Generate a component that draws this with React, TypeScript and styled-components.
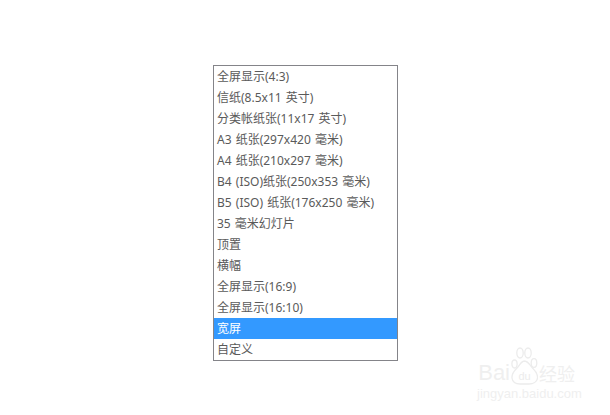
import React from "react";
import styled, { createGlobalStyle } from "styled-components";

const GlobalStyle = createGlobalStyle`
  html, body {
    margin: 0;
    padding: 0;
    background: #ffffff;
  }
  #root {
    width: 610px;
    height: 415px;
  }
`;

const Page = styled.div`
  position: relative;
  display: flex;
  align-items: flex-start;
  width: 610px;
  height: 415px;
  overflow: hidden;
  box-sizing: border-box;
  padding: 65px 0 0 213px;
  font-family: "Noto Sans", "Noto Sans CJK SC", sans-serif;
`;

const List = styled.ul`
  display: flex;
  flex-direction: column;
  width: 185px;
  box-sizing: border-box;
  margin: 0;
  padding: 0;
  list-style: none;
  border: 1px solid #848489;
`;

const Item = styled.li<{ $selected?: boolean }>`
  height: 21px;
  line-height: 21px;
  padding-left: 3px;
  font-size: 12px;
  word-spacing: 1px;
  white-space: nowrap;
  color: ${(p) => (p.$selected ? "#ffffff" : "#5a5a5a")};
  background: ${(p) => (p.$selected ? "#3399ff" : "transparent")};
`;

const Watermark = styled.div`
  position: absolute;
  left: 477px;
  top: 347px;
  width: 100px;
  display: flex;
  flex-direction: column;
  align-items: flex-start;
  gap: 2px;
  color: #efefef;
`;

const LogoRow = styled.div`
  display: flex;
  align-items: flex-end;
  height: 38px;
`;

const BaiText = styled.span`
  width: 33px;
  margin-bottom: 2px;
  font-family: "Liberation Sans", sans-serif;
  font-size: 22px;
  line-height: 20px;
  text-align: right;
`;

const Paw = styled.svg`
  display: block;
  margin: 0 1px;
`;

const JingYan = styled.span`
  margin-bottom: 3px;
  font-family: "Noto Sans CJK SC", sans-serif;
  font-size: 18px;
  line-height: 18px;
`;

const Domain = styled.span`
  font-family: "Liberation Sans", sans-serif;
  font-size: 13px;
  line-height: 13px;
  white-space: nowrap;
`;

const items = [
  "全屏显示(4:3)",
  "信纸(8.5x11 英寸)",
  "分类帐纸张(11x17 英寸)",
  "A3 纸张(297x420 毫米)",
  "A4 纸张(210x297 毫米)",
  "B4 (ISO)纸张(250x353 毫米)",
  "B5 (ISO) 纸张(176x250 毫米)",
  "35 毫米幻灯片",
  "顶置",
  "横幅",
  "全屏显示(16:9)",
  "全屏显示(16:10)",
  "宽屏",
  "自定义",
];

export default function App() {
  return (
    <Page>
      <GlobalStyle />
      <List>
        {items.map((label) => (
          <Item key={label} $selected={label === "宽屏"}>
            {label}
          </Item>
        ))}
      </List>
      <Watermark>
        <LogoRow>
          <BaiText>Bai</BaiText>
          <Paw width="27" height="38" viewBox="0 0 27 38" fill="none" stroke="#ececec" strokeWidth="1.3">
            <ellipse cx="3.5" cy="17" rx="2.6" ry="4" />
            <ellipse cx="9" cy="6" rx="3.2" ry="5" />
            <ellipse cx="17" cy="6" rx="3.2" ry="5" />
            <ellipse cx="23" cy="16" rx="2.8" ry="4.4" />
            <path d="M13.5 14c-3.4 0-4.5 4-7.5 7-3.5 3.500-5.500 6-5 10 .5 4 4 6 8 6h9c4 0 8-2 8.500-6 .5-4-1.500-6.500-5-10-3-3-4.100-7-8.500-7z" />
            <text x="13.5" y="33" textAnchor="middle" fontFamily="Liberation Sans" fontSize="11" fill="#ececec" stroke="none">du</text>
          </Paw>
          <JingYan>经验</JingYan>
        </LogoRow>
        <Domain>jingyan.baidu.com</Domain>
      </Watermark>
    </Page>
  );
}
